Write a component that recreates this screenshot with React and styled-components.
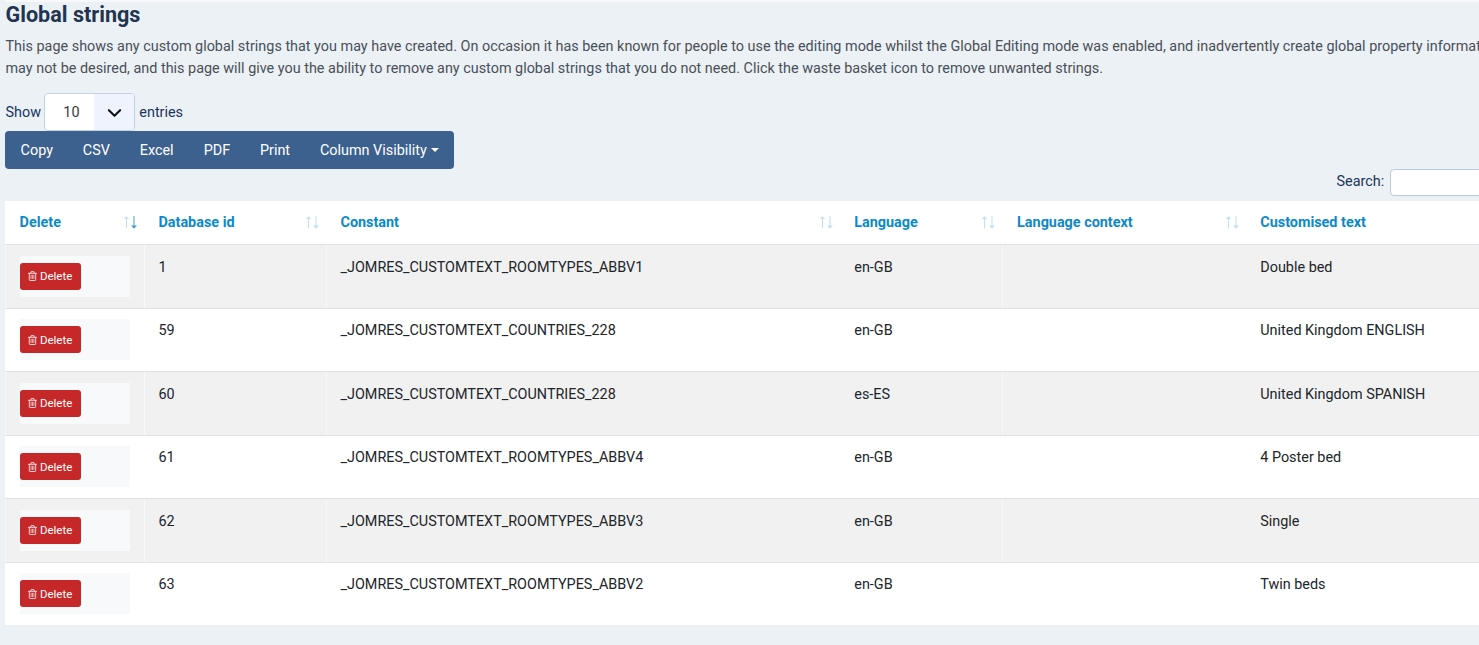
import React from "react";
import styled, { createGlobalStyle } from "styled-components";

const GlobalStyle = createGlobalStyle`
  * { box-sizing: border-box; }
  html, body { margin: 0; }
  body {
    background: #ecf1f6;
    color: #212529;
    font-family: Roboto, "Liberation Sans", sans-serif;
    font-size: 14.4px;
    line-height: 1.5;
  }
`;

const Viewport = styled.div`
  width: 100%;
  height: 645px;
  overflow: hidden;
`;

const Page = styled.main`
  width: 1640px;
  padding-left: 5px;
  display: flex;
  flex-direction: column;
  align-items: flex-start;
`;

const TopEdge = styled.div`
  width: 100%;
  height: 2px;
  background: #f7f9fc;
`;

const Title = styled.h1`
  margin: 0 0 0 0.5px;
  font-size: 21.6px;
  line-height: 26px;
  font-weight: 700;
  color: #22344f;
`;

const Intro = styled.p`
  margin: 8px 0 0 0.5px;
  height: 44px;
  line-height: 22px;
  color: #495057;
  white-space: nowrap;
`;

const LengthControl = styled.label`
  display: flex;
  align-items: center;
  height: 38px;
  margin-top: 13px;
  padding-left: 0.5px;
  line-height: 24px;
  color: #193560;
`;

const LengthText = styled.span`
  padding-top: 1px;
`;

const PageSize = styled.span`
  display: flex;
  width: 91px;
  height: 38px;
  margin: 0 4px 0 3.3px;
  border: 1px solid #c2d0e8;
  border-radius: 4px;
  background: #fff;
  color: #343a40;
  overflow: hidden;
`;

const PageSizeValue = styled.span`
  width: 49px;
  padding: 1px 0 0 18px;
  line-height: 36px;
`;

const PageSizeArrow = styled.span`
  flex: 1;
  display: flex;
  align-items: center;
  justify-content: center;
  background: #eff3fd;
`;

const Toolbar = styled.div`
  display: flex;
  height: 38px;
  border-radius: 4px;
  background: #3c618f;
  overflow: hidden;
`;

const ToolbarButton = styled.button`
  display: flex;
  align-items: center;
  width: ${(p) => p.$width}px;
  padding: 1px 0 0 15.6px;
  border: 0;
  background: none;
  color: #fff;
  font: inherit;
  white-space: nowrap;
`;

const Caret = styled.span`
  margin: -2px 0 0 4px;
  border: 4.3px solid transparent;
  border-top-color: currentColor;
  border-bottom: 0;
`;

const SearchControl = styled.label`
  display: flex;
  align-items: flex-start;
  height: 32px;
  margin-left: 1331.5px;
  color: #193560;
`;

const SearchText = styled.span`
  padding-top: 1px;
  line-height: 24px;
`;

const SearchInput = styled.input`
  width: 200px;
  height: 27px;
  margin-left: 5.6px;
  border: 1px solid #b9c9e4;
  border-radius: 4px;
  background: #fff;
`;

const columnTracks = "138.9px 182px 513.8px 162.8px 243.2px 390px";

const Table = styled.div`
  width: 1631px;
  height: 424px;
  overflow: hidden;
  background: #fff;
`;

const HeaderRow = styled.div`
  display: grid;
  grid-template-columns: ${columnTracks};
  height: 44px;
  border-bottom: 1px solid #dee2e6;
`;

const HeaderCell = styled.div`
  display: flex;
  justify-content: space-between;
  padding: 1px 7px 0 14.6px;
  line-height: 42px;
  font-weight: 700;
  color: #0a89cd;
`;

const SortArrows = styled.svg`
  width: 14px;
  height: 14px;
  margin-top: 13px;
`;

const Row = styled.div`
  display: grid;
  grid-template-columns: ${columnTracks};
  height: 63.5px;
  border-bottom: 1px solid #dee2e6;
  background: ${(p) => (p.$striped ? "#f1f1f1" : "#fff")};
`;

const Cell = styled.div`
  padding: 11.5px 14.6px 0 13.6px;
  border-left: 1px solid ${(p) => (p.$divided ? "#f8f8f9" : "transparent")};
`;

const ActionBox = styled.div`
  display: flex;
  align-items: center;
  width: 110px;
  height: 41px;
  margin-top: -0.9px;
  background: #f8f9fb;
`;

const DeleteButton = styled.button`
  display: flex;
  align-items: center;
  gap: 3px;
  width: 61.5px;
  height: 27px;
  padding: 0 0 0 8.3px;
  border: 0;
  border-radius: 3px;
  background: #c62728;
  color: #fff;
  font: 11.5px Roboto, sans-serif;
`;

const columns = ["Delete", "Database id", "Constant", "Language", "Language context", "Customised text"];

const entries = [
  ["1", "_JOMRES_CUSTOMTEXT_ROOMTYPES_ABBV1", "en-GB", "Double bed"],
  ["59", "_JOMRES_CUSTOMTEXT_COUNTRIES_228", "en-GB", "United Kingdom ENGLISH"],
  ["60", "_JOMRES_CUSTOMTEXT_COUNTRIES_228", "es-ES", "United Kingdom SPANISH"],
  ["61", "_JOMRES_CUSTOMTEXT_ROOMTYPES_ABBV4", "en-GB", "4 Poster bed"],
  ["62", "_JOMRES_CUSTOMTEXT_ROOMTYPES_ABBV3", "en-GB", "Single"],
  ["63", "_JOMRES_CUSTOMTEXT_ROOMTYPES_ABBV2", "en-GB", "Twin beds"],
];

const exportButtons = [
  ["Copy", 62.2],
  ["CSV", 57],
  ["Excel", 64],
  ["PDF", 56.2],
  ["Print", 60],
];

function SortIcon({ active }) {
  return (
    <SortArrows viewBox="0 0 14 14" fill="#0a89cd">
      <path d="M3 13.5V4H0.8L3.5 1.2L6.2 4H4V13.5z" opacity="0.25" />
      <path d="M10.5 1V10.5H8L11 13.7L14 10.5H11.5V1z" opacity={active ? 0.8 : 0.25} />
    </SortArrows>
  );
}

function TrashIcon() {
  return (
    <svg width="9" height="10" viewBox="0 0 9 10" fill="none" stroke="currentColor" strokeWidth="0.8">
      <path d="M0 2.3H9M2.6 2.3L3.2 0.6H5.8L6.4 2.3M1.3 2.3V8.6Q1.3 9.5 2.1 9.5H6.9Q7.7 9.5 7.7 8.6V2.3" />
      <path d="M3.1 3.8V8M4.5 3.8V8M5.9 3.8V8" strokeWidth="0.65" />
    </svg>
  );
}

export default function App() {
  return (
    <Viewport>
      <GlobalStyle />
      <Page>
        <TopEdge />
        <Title>Global strings</Title>
        <Intro>
          This page shows any custom global strings that you may have created. On occasion it has been known for
          people to use the editing mode whilst the Global Editing mode was enabled, and inadvertently create global
          property information
          <br />
          may not be desired, and this page will give you the ability to remove any custom global strings that you do
          not need. Click the waste basket icon to remove unwanted strings.
        </Intro>
        <LengthControl>
          <LengthText>Show</LengthText>
          <PageSize>
            <PageSizeValue>10</PageSizeValue>
            <PageSizeArrow>
              <svg width="15" height="15" viewBox="0 0 16 16" fill="none" stroke="#111" strokeWidth="2.2" strokeLinecap="round" strokeLinejoin="round">
                <path d="M2 5.5l6 6 6-6" />
              </svg>
            </PageSizeArrow>
          </PageSize>
          <LengthText>entries</LengthText>
        </LengthControl>
        <Toolbar>
          {exportButtons.map(([label, width]) => (
            <ToolbarButton key={label} $width={width}>{label}</ToolbarButton>
          ))}
          <ToolbarButton $width={149.6}>
            Column Visibility
            <Caret />
          </ToolbarButton>
        </Toolbar>
        <SearchControl>
          <SearchText>Search:</SearchText>
          <SearchInput />
        </SearchControl>
        <Table>
          <HeaderRow>
            {columns.map((name, i) => (
              <HeaderCell key={name}>
                {name}
                <SortIcon active={i === 0} />
              </HeaderCell>
            ))}
          </HeaderRow>
          {entries.map(([id, constant, language, text], i) => {
            const striped = i % 2 === 0;
            return (
              <Row key={id} $striped={striped}>
                <Cell $divided={striped}>
                  <ActionBox>
                    <DeleteButton>
                      <TrashIcon />
                      Delete
                    </DeleteButton>
                  </ActionBox>
                </Cell>
                <Cell $divided={striped}>{id}</Cell>
                <Cell $divided={striped}>{constant}</Cell>
                <Cell>{language}</Cell>
                <Cell $divided={striped} />
                <Cell>{text}</Cell>
              </Row>
            );
          })}
        </Table>
      </Page>
    </Viewport>
  );
}
